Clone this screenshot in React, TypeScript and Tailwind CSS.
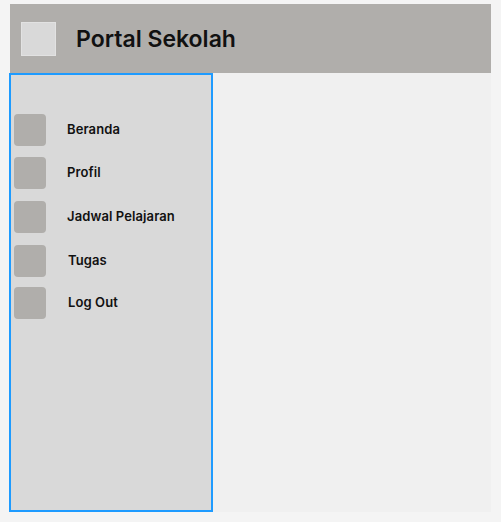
const MENU = [
  { label: "Beranda", top: "mt-0", text: "ml-[21px]" },
  { label: "Profil", top: "mt-[11px]", text: "ml-[21px]" },
  { label: "Jadwal Pelajaran", top: "mt-[12px]", text: "ml-[21px]" },
  { label: "Tugas", top: "mt-[12px]", text: "ml-[22px]" },
  { label: "Log Out", top: "mt-[10px]", text: "ml-[22px]" },
];

export default function App() {
  return (
    <div
      className="w-[501px] h-[522px] bg-[#f4f4f4] pt-[4px] pl-[10px]"
      style={{ fontFamily: "Inter, 'Noto Sans', sans-serif" }}
    >
      <div className="w-[481px] h-[508px] flex flex-col">
        {/* Header */}
        <header className="h-[69px] shrink-0 bg-[#b0aeab] flex items-center pl-[11px] gap-[20px]">
          <div className="w-[35px] h-[34px] bg-[#d9d9d9] border border-[#e2e2e2]" />
          <h1 className="mt-[1px] text-[23px] font-semibold text-[#111] leading-none">
            Portal Sekolah
          </h1>
        </header>

        <div className="flex flex-1 min-h-0">
          {/* Sidebar */}
          <aside className="-ml-px w-[204px] shrink-0 bg-[#d9d9d9] border-2 border-[#1e9bff] pt-[39px] pl-[3px] flex flex-col">
            {MENU.map((m) => (
              <div key={m.label} className={"flex items-center h-[32px] " + m.top}>
                <div className="w-[32px] h-[32px] rounded-[4px] bg-[#b0aeab]" />
                <span className={"text-[13px] font-semibold tracking-[0.1px] text-[#111] " + m.text}>
                  {m.label}
                </span>
              </div>
            ))}
          </aside>

          {/* Content */}
          <main className="flex-1 bg-[#f0f0f0]" />
        </div>
      </div>
    </div>
  );
}
